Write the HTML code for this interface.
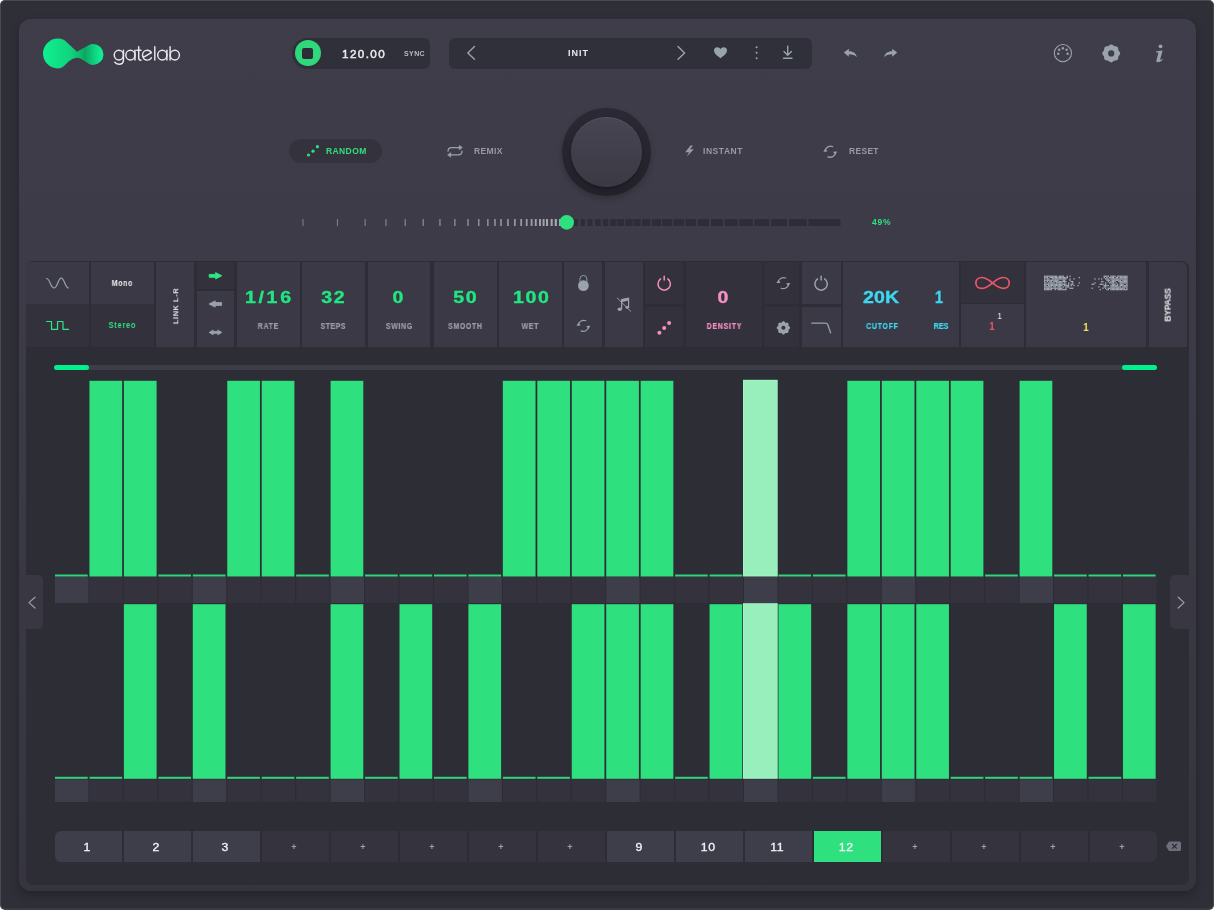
<!DOCTYPE html><html><head><meta charset="utf-8"><style>
*{margin:0;padding:0;box-sizing:border-box}
html,body{width:1214px;height:910px;overflow:hidden;background:#ffffff;font-family:"Liberation Sans",sans-serif}
.abs{position:absolute}
#frame{position:absolute;left:0;top:0;width:1214px;height:910px;border-radius:5px;background:#2f2f38;border-top:1px solid #4a4a55;border-left:1px solid #4a4a55;border-right:1px solid #45454f;border-bottom:2px solid #3a3a44}
#panel{position:absolute;left:19px;top:19px;width:1177px;height:872px;border-radius:12px;background:linear-gradient(180deg,#3e3d49 0%,#3b3a46 40%,#36353f 100%);box-shadow:0 4px 10px rgba(0,0,0,0.25)}
.t{position:absolute;white-space:nowrap;font-weight:bold;line-height:1;will-change:transform}
.box{position:absolute}
</style></head><body>
<div id="frame"></div>
<div id="panel"></div>
<svg class="abs" style="left:40px;top:35px" width="70" height="36" viewBox="40 35 70 36">
<defs><linearGradient id="lg" x1="43" y1="0" x2="103" y2="0" gradientUnits="userSpaceOnUse"><stop offset="0" stop-color="#0ff08f"/><stop offset="0.45" stop-color="#10d47f"/><stop offset="0.6" stop-color="#0fbd70"/><stop offset="0.7" stop-color="#0aa862"/><stop offset="0.85" stop-color="#10d07f"/><stop offset="1" stop-color="#0ff596"/></linearGradient></defs>
<path d="M58 38.5 C62 38.5 64.5 40 66.5 42 L77 51.8 L88.5 45.2 C90 44.4 91.5 44 93 44 A10.45 10.45 0 0 1 93 64.9 C91 64.9 89.5 64.3 88 63.3 L81 58.8 C79 57.8 77.5 57.6 75.5 57.9 C73 58.3 71 59.5 68 62 C65 65 62 68.5 58 68.5 A15 15 0 0 1 58 38.5 Z" fill="url(#lg)"/>
</svg>
<svg class="abs" style="left:108px;top:42px" width="78" height="26" viewBox="108 42 78 26" fill="none" stroke="#e8e8ec" stroke-width="1.45" stroke-linecap="round">
<ellipse cx="118.85" cy="55.1" rx="4.6" ry="4.9"/><path d="M123.45 50.2 V60 C123.45 63 121.5 64.3 119 64.3 C117 64.3 115.5 63.5 114.8 62.2"/>
<ellipse cx="130.4" cy="55.1" rx="4.6" ry="4.9"/><path d="M135 50.2 V60.1"/>
<path d="M138.7 46.8 V58 C138.7 59.5 139.6 60.2 141 60.2 M136.8 50.3 H141"/>
<path d="M143.2 57.3 L151.3 52.6 C150.5 51 149 50.2 147.2 50.2 C144.6 50.2 142.5 52.4 142.5 55.1 C142.5 57.9 144.6 60.1 147.2 60.1 C149 60.1 150.5 59.2 151.4 57.8"/>
<path d="M154.8 46.8 V60.1"/>
<ellipse cx="162.3" cy="55.1" rx="4.6" ry="4.9"/><path d="M166.9 50.2 V60.1"/>
<path d="M170.1 46.8 V60.1"/><ellipse cx="174.8" cy="55.1" rx="4.6" ry="4.9"/>
</svg>
<div class="box" style="left:292px;top:37.5px;width:137.5px;height:31.5px;background:#30303a;border-radius:16px 6px 6px 16px"></div>
<div class="box" style="left:294.5px;top:40.3px;width:26px;height:26px;border-radius:50%;background:#2fd97b"></div>
<div class="box" style="left:302px;top:48px;width:10.5px;height:10.5px;border-radius:2px;background:#2d2c37"></div>
<div class="t" style="left:342.3px;top:49.1px;font-size:10.8px;color:#ececf0;letter-spacing:1.3px;font-weight:normal;-webkit-text-stroke:0.45px currentColor;transform:scaleX(1.08);transform-origin:0 0">120.00</div>
<div class="t" style="left:403.5px;top:49.8px;font-size:7px;color:#b9b9c2;letter-spacing:0.4px">SYNC</div>
<div class="box" style="left:448.6px;top:37.7px;width:363.6px;height:31.3px;background:#30303a;border-radius:6px"></div>
<svg class="abs" style="left:0;top:0" width="1214" height="100" fill="none" stroke="#9aa2ac" stroke-width="1.4" stroke-linecap="round" stroke-linejoin="round">
<path d="M474.5 46.5 L467.8 53 L474.5 59.3"/>
<path d="M678 46.5 L684.6 53 L678 59.3"/>
<path d="M720.5 58.3 C717 55.5 714 53.5 714 50.5 C714 48.5 715.5 47.3 717.3 47.3 C718.8 47.3 719.8 48 720.5 49.2 C721.2 48 722.2 47.3 723.7 47.3 C725.5 47.3 727 48.5 727 50.5 C727 53.5 724 55.5 720.5 58.3 Z" fill="#9aa2ac" stroke="none"/>
<circle cx="756.6" cy="47.3" r="1" fill="#9aa2ac" stroke="none"/><circle cx="756.6" cy="52.8" r="1" fill="#9aa2ac" stroke="none"/><circle cx="756.6" cy="58.2" r="1" fill="#9aa2ac" stroke="none"/>
<path d="M787.7 46.2 V55 M784 51.5 L787.7 55.3 L791.4 51.5 M783.5 58.2 H792"/>
</svg>
<div class="t" style="left:567.5px;top:48.8px;font-size:9px;color:#e8e8ee;letter-spacing:1.0px">INIT</div>
<svg class="abs" style="left:0;top:0" width="1214" height="100">
<path d="M843.8 52.5 L848.8 48.8 L848.8 51.2 C853.5 51.2 856.3 53.5 856.8 57.2 C855 55.2 852.5 54.3 848.8 54.3 L848.8 56.7 Z" fill="#9aa2ac"/>
<path d="M897.2 52.5 L892.2 48.8 L892.2 51.2 C887.5 51.2 884.7 53.5 884.2 57.2 C886 55.2 888.5 54.3 892.2 54.3 L892.2 56.7 Z" fill="#9aa2ac"/>
</svg>
<svg class="abs" style="left:0;top:0" width="1214" height="100">
<circle cx="1062.9" cy="53.1" r="8.6" fill="none" stroke="#9aa2ac" stroke-width="1.1"/>
<circle cx="1058.2" cy="53.8" r="1.2" fill="#9aa2ac"/><circle cx="1059.2" cy="49.8" r="1.2" fill="#9aa2ac"/><circle cx="1062.9" cy="48.2" r="1.2" fill="#9aa2ac"/><circle cx="1066.6" cy="49.8" r="1.2" fill="#9aa2ac"/><circle cx="1067.6" cy="53.8" r="1.2" fill="#9aa2ac"/>
<path d="M1061.2 61.6 Q1062.9 60 1064.6 61.6 Z" fill="#9aa2ac"/>
<path d="M1120.20 53.40 L1120.11 53.98 L1119.85 54.54 L1119.49 55.05 L1119.10 55.52 L1118.75 55.96 L1118.50 56.42 L1118.35 56.93 L1118.28 57.49 L1118.23 58.09 L1118.12 58.71 L1117.91 59.29 L1117.56 59.76 L1117.09 60.11 L1116.51 60.32 L1115.89 60.43 L1115.29 60.48 L1114.73 60.55 L1114.22 60.70 L1113.76 60.95 L1113.32 61.30 L1112.85 61.69 L1112.34 62.05 L1111.78 62.31 L1111.20 62.40 L1110.62 62.31 L1110.06 62.05 L1109.55 61.69 L1109.08 61.30 L1108.64 60.95 L1108.18 60.70 L1107.67 60.55 L1107.11 60.48 L1106.51 60.43 L1105.89 60.32 L1105.31 60.11 L1104.84 59.76 L1104.49 59.29 L1104.28 58.71 L1104.17 58.09 L1104.12 57.49 L1104.05 56.93 L1103.90 56.42 L1103.65 55.96 L1103.30 55.52 L1102.91 55.05 L1102.55 54.54 L1102.29 53.98 L1102.20 53.40 L1102.29 52.82 L1102.55 52.26 L1102.91 51.75 L1103.30 51.28 L1103.65 50.84 L1103.90 50.38 L1104.05 49.87 L1104.12 49.31 L1104.17 48.71 L1104.28 48.09 L1104.49 47.51 L1104.84 47.04 L1105.31 46.69 L1105.89 46.48 L1106.51 46.37 L1107.11 46.32 L1107.67 46.25 L1108.18 46.10 L1108.64 45.85 L1109.08 45.50 L1109.55 45.11 L1110.06 44.75 L1110.62 44.49 L1111.20 44.40 L1111.78 44.49 L1112.34 44.75 L1112.85 45.11 L1113.32 45.50 L1113.76 45.85 L1114.22 46.10 L1114.73 46.25 L1115.29 46.32 L1115.89 46.37 L1116.51 46.48 L1117.09 46.69 L1117.56 47.04 L1117.91 47.51 L1118.12 48.09 L1118.23 48.71 L1118.28 49.31 L1118.35 49.87 L1118.50 50.38 L1118.75 50.84 L1119.10 51.28 L1119.49 51.75 L1119.85 52.26 L1120.11 52.82 Z M1114.3 53.4 A3.1 3.1 0 1 0 1108.1000000000001 53.4 A3.1 3.1 0 1 0 1114.3 53.4 Z" fill="#9aa2ac" fill-rule="evenodd"/>
<circle cx="1160.5" cy="46.3" r="1.9" fill="#9aa2ac"/>
<path d="M1156.3 51.2 L1162.6 50.4 L1160.2 59.3 C1160 60.2 1160.6 60.3 1161.3 59.6 L1162.6 58.7 L1162.3 60.3 C1160.9 61.6 1159.4 62.2 1157.8 62.2 C1156.6 62.2 1156.1 61.4 1156.5 60 L1158.5 52.6 L1156.1 52.5 Z" fill="#9aa2ac"/>
</svg>
<div class="box" style="left:289.2px;top:139.1px;width:92.8px;height:23.5px;border-radius:12px;background:#33323d"></div>
<svg class="abs" style="left:0;top:100px" width="1214" height="80" viewBox="0 100 1214 80">
<circle cx="308.5" cy="155" r="1.6" fill="#2fe07e"/><circle cx="313" cy="151.2" r="1.6" fill="#2fe07e"/><circle cx="317.4" cy="146.7" r="1.6" fill="#2fe07e"/>
<g fill="none" stroke="#9aa2ac" stroke-width="1.3" stroke-linecap="round" stroke-linejoin="round">
<path d="M448 151.2 Q448 147.6 451.6 147.6 H459.6"/>
<path d="M462 151.1 Q462 154.9 458.4 154.9 H450.6"/>
<path d="M825.1 150.5 A5.6 5.6 0 0 1 832.6 146.6"/><path d="M835.6 152.8 A5.6 5.6 0 0 1 828 156.8"/>
</g>
<path d="M459.2 145.3 L462.4 147.6 L459.2 149.9 Z M450.8 152.6 L447.6 154.9 L450.8 157.2 Z" fill="#9aa2ac" stroke="#9aa2ac" stroke-width="0.5" stroke-linejoin="round"/>
<path d="M823.3 151.7 L825.4 148.5 L827.4 151.5 Z M837.2 151.6 L835.1 154.8 L833.1 151.8 Z" fill="#9aa2ac"/>
<path d="M690.5 145.4 L685.2 152.3 L689 152.3 L686.7 156.8 L693.8 149.3 L690 149.3 L693 145.4 Z" fill="#9a9aa4"/>
</svg>
<div class="t" style="left:326.3px;top:147px;font-size:8.5px;color:#2fe07e;letter-spacing:0.4px">RANDOM</div>
<div class="t" style="left:473.5px;top:147px;font-size:8.5px;color:#9a9aa4;letter-spacing:0.4px">REMIX</div>
<div class="t" style="left:703px;top:147.4px;font-size:8.5px;color:#9a9aa4;letter-spacing:0.55px">INSTANT</div>
<div class="t" style="left:848.6px;top:147.4px;font-size:8.5px;color:#9a9aa4;letter-spacing:0.3px">RESET</div>
<div class="box" style="left:562.2px;top:107.8px;width:88.6px;height:88.6px;border-radius:50%;background:linear-gradient(180deg,#2b2a34,#22212a);box-shadow:0 3px 6px rgba(0,0,0,0.2)"></div>
<div class="box" style="left:571.2px;top:116.7px;width:70.8px;height:70.8px;border-radius:50%;background:linear-gradient(180deg,#464551,#3a3944);box-shadow:inset 0 1px 0 rgba(255,255,255,0.08),0 2px 3px rgba(0,0,0,0.25)"></div>
<svg class="abs" style="left:0;top:200px" width="1214" height="40" viewBox="0 200 1214 40"><rect x="302.5" y="219" width="1.00" height="7" fill="rgb(128,130,138)"/><rect x="336.9" y="219" width="1.05" height="7" fill="rgb(129,131,139)"/><rect x="364.6" y="219" width="1.10" height="7" fill="rgb(131,133,141)"/><rect x="385.4" y="219" width="1.15" height="7" fill="rgb(133,135,143)"/><rect x="404.6" y="219" width="1.20" height="7" fill="rgb(134,136,144)"/><rect x="422.6" y="219" width="1.25" height="7" fill="rgb(136,138,146)"/><rect x="439.3" y="219" width="1.30" height="7" fill="rgb(138,140,148)"/><rect x="454.2" y="219" width="1.35" height="7" fill="rgb(139,141,149)"/><rect x="467.3" y="219" width="1.40" height="7" fill="rgb(141,143,151)"/><rect x="478.0" y="219" width="1.45" height="7" fill="rgb(143,145,153)"/><rect x="487.1" y="219" width="1.50" height="7" fill="rgb(144,146,154)"/><rect x="494.2" y="219" width="1.55" height="7" fill="rgb(146,148,156)"/><rect x="500.2" y="219" width="1.60" height="7" fill="rgb(148,150,158)"/><rect x="507.1" y="219" width="1.65" height="7" fill="rgb(149,151,159)"/><rect x="514.0" y="219" width="1.70" height="7" fill="rgb(151,153,161)"/><rect x="520.3" y="219" width="1.75" height="7" fill="rgb(153,155,163)"/><rect x="525.8" y="219" width="1.80" height="7" fill="rgb(154,156,164)"/><rect x="530.7" y="219" width="1.85" height="7" fill="rgb(156,158,166)"/><rect x="534.8" y="219" width="1.90" height="7" fill="rgb(158,160,168)"/><rect x="539.0" y="219" width="1.95" height="7" fill="rgb(159,161,169)"/><rect x="542.6" y="219" width="2.00" height="7" fill="rgb(161,163,171)"/><rect x="546.0" y="219" width="2.05" height="7" fill="rgb(163,165,173)"/><rect x="550.6" y="219" width="2.10" height="7" fill="rgb(164,166,174)"/><rect x="554.7" y="219" width="2.15" height="7" fill="rgb(166,168,176)"/><rect x="559.0" y="219" width="2.20" height="7" fill="rgb(168,170,178)"/><rect x="573.8" y="219" width="4.1" height="7" fill="#2d2d37"/><rect x="580.8" y="219" width="4.0" height="7" fill="#2d2d37"/><rect x="587.7" y="219" width="4.6" height="7" fill="#2d2d37"/><rect x="595.2" y="219" width="5.4" height="7" fill="#2d2d37"/><rect x="602.9" y="219" width="5.5" height="7" fill="#2d2d37"/><rect x="610.0" y="219" width="6.5" height="7" fill="#2d2d37"/><rect x="617.3" y="219" width="6.7" height="7" fill="#2d2d37"/><rect x="625.2" y="219" width="7.5" height="7" fill="#2d2d37"/><rect x="633.6" y="219" width="7.1" height="7" fill="#2d2d37"/><rect x="642.0" y="219" width="8.5" height="7" fill="#2d2d37"/><rect x="652.0" y="219" width="9.0" height="7" fill="#2d2d37"/><rect x="662.0" y="219" width="9.9" height="7" fill="#2d2d37"/><rect x="673.4" y="219" width="10.6" height="7" fill="#2d2d37"/><rect x="685.4" y="219" width="10.6" height="7" fill="#2d2d37"/><rect x="697.8" y="219" width="11.2" height="7" fill="#2d2d37"/><rect x="711.1" y="219" width="11.8" height="7" fill="#2d2d37"/><rect x="724.6" y="219" width="13.0" height="7" fill="#2d2d37"/><rect x="739.3" y="219" width="13.5" height="7" fill="#2d2d37"/><rect x="754.4" y="219" width="14.8" height="7" fill="#2d2d37"/><rect x="771.3" y="219" width="15.6" height="7" fill="#2d2d37"/><rect x="789.0" y="219" width="17.8" height="7" fill="#2d2d37"/><rect x="808.5" y="219" width="32.0" height="7" fill="#2d2d37"/><circle cx="566.7" cy="222.4" r="7.3" fill="#2fe07e"/></svg>
<div class="t" style="left:872px;top:218px;font-size:8.5px;color:#2fe07e;letter-spacing:0.8px">49%</div>
<div class="box" style="left:25.5px;top:261px;width:1163px;height:623.7px;border-radius:7px;background:#2d2d36"></div>
<div class="box" style="left:26px;top:262px;width:63.0px;height:42.0px;background:#3a3945;border-top-left-radius:6px"></div>
<div class="box" style="left:26px;top:304px;width:63.0px;height:42.7px;background:#33323c;"></div>
<div class="box" style="left:91px;top:262px;width:62.7px;height:42.0px;background:#3a3945;"></div>
<div class="box" style="left:91px;top:304px;width:62.7px;height:42.7px;background:#33323c;"></div>
<div class="box" style="left:156px;top:262px;width:38.3px;height:84.7px;background:#3a3945;"></div>
<div class="box" style="left:196.7px;top:262px;width:37.1px;height:27.4px;background:#33323c;"></div>
<div class="box" style="left:196.7px;top:291px;width:37.1px;height:55.7px;background:#3a3945;"></div>
<div class="box" style="left:237.3px;top:262px;width:62.7px;height:84.7px;background:#3a3945;"></div>
<div class="box" style="left:302.3px;top:262px;width:63.0px;height:84.7px;background:#3a3945;"></div>
<div class="box" style="left:367.9px;top:262px;width:62.4px;height:84.7px;background:#3a3945;"></div>
<div class="box" style="left:433.7px;top:262px;width:63.3px;height:84.7px;background:#3a3945;"></div>
<div class="box" style="left:498.8px;top:262px;width:63.3px;height:84.7px;background:#3a3945;"></div>
<div class="box" style="left:564px;top:262px;width:38.3px;height:84.7px;background:#3a3945;"></div>
<div class="box" style="left:604.7px;top:262px;width:38.2px;height:84.7px;background:#3a3945;"></div>
<div class="box" style="left:644.8px;top:262px;width:38.5px;height:42.3px;background:#33323c;"></div>
<div class="box" style="left:644.8px;top:306.6px;width:38.5px;height:40.1px;background:#33323c;"></div>
<div class="box" style="left:685.8px;top:262px;width:76.7px;height:84.7px;background:#33323c;"></div>
<div class="box" style="left:764.2px;top:262px;width:35.0px;height:42.3px;background:#33323c;"></div>
<div class="box" style="left:764.2px;top:306.6px;width:35.0px;height:40.1px;background:#33323c;"></div>
<div class="box" style="left:801.8px;top:262px;width:38.9px;height:42.3px;background:#3a3945;"></div>
<div class="box" style="left:801.8px;top:306.6px;width:38.9px;height:40.1px;background:#3a3945;"></div>
<div class="box" style="left:842.8px;top:262px;width:115.9px;height:84.7px;background:#3a3945;"></div>
<div class="box" style="left:961px;top:262px;width:62.6px;height:41.4px;background:#33323c;"></div>
<div class="box" style="left:961px;top:304px;width:62.6px;height:42.7px;background:#3a3945;"></div>
<div class="box" style="left:1026.2px;top:262px;width:120.1px;height:84.7px;background:#3a3945;"></div>
<div class="box" style="left:1148.7px;top:262px;width:38.8px;height:84.7px;background:#3a3945;border-top-right-radius:6px"></div>
<div class="t" style="left:168.3px;width:200px;text-align:center;top:289.6px;font-size:16px;color:#22e581;letter-spacing:2.2px;text-indent:2.2px;transform:scaleX(1.22);-webkit-text-stroke:0.35px currentColor;">1/16</div>
<div class="t" style="left:232.8px;width:200px;text-align:center;top:289.6px;font-size:16px;color:#22e581;letter-spacing:1.4px;text-indent:1.4px;transform:scaleX(1.22);-webkit-text-stroke:0.35px currentColor;">32</div>
<div class="t" style="left:297.8px;width:200px;text-align:center;top:289.6px;font-size:16px;color:#22e581;letter-spacing:0px;text-indent:0px;transform:scaleX(1.22);-webkit-text-stroke:0.35px currentColor;">0</div>
<div class="t" style="left:364.6px;width:200px;text-align:center;top:289.6px;font-size:16px;color:#22e581;letter-spacing:1.4px;text-indent:1.4px;transform:scaleX(1.22);-webkit-text-stroke:0.35px currentColor;">50</div>
<div class="t" style="left:430.6px;width:200px;text-align:center;top:289.6px;font-size:16px;color:#22e581;letter-spacing:1.4px;text-indent:1.4px;transform:scaleX(1.22);-webkit-text-stroke:0.35px currentColor;">100</div>
<div class="t" style="left:168.2px;width:200px;text-align:center;top:323.4px;font-size:8.2px;color:#9d9da8;letter-spacing:0.75px;text-indent:0.75px;transform:scaleX(0.86);-webkit-text-stroke:0.2px currentColor">RATE</div>
<div class="t" style="left:233.3px;width:200px;text-align:center;top:323.4px;font-size:8.2px;color:#9d9da8;letter-spacing:0.5px;text-indent:0.5px;transform:scaleX(0.86);-webkit-text-stroke:0.2px currentColor">STEPS</div>
<div class="t" style="left:298.6px;width:200px;text-align:center;top:323.4px;font-size:8.2px;color:#9d9da8;letter-spacing:0.7px;text-indent:0.7px;transform:scaleX(0.86);-webkit-text-stroke:0.2px currentColor">SWING</div>
<div class="t" style="left:364.8px;width:200px;text-align:center;top:323.4px;font-size:8.2px;color:#9d9da8;letter-spacing:0.7px;text-indent:0.7px;transform:scaleX(0.86);-webkit-text-stroke:0.2px currentColor">SMOOTH</div>
<div class="t" style="left:430.4px;width:200px;text-align:center;top:323.4px;font-size:8.2px;color:#9d9da8;letter-spacing:0.7px;text-indent:0.7px;transform:scaleX(0.86);-webkit-text-stroke:0.2px currentColor">WET</div>
<div class="t" style="left:622.7px;width:200px;text-align:center;top:289.6px;font-size:16px;color:#f590c3;letter-spacing:0px;text-indent:0px;transform:scaleX(1.22);-webkit-text-stroke:0.35px currentColor;">0</div>
<div class="t" style="left:623.5px;width:200px;text-align:center;top:323.4px;font-size:8.2px;color:#f590c3;letter-spacing:0.85px;text-indent:0.85px;transform:scaleX(0.86);-webkit-text-stroke:0.2px currentColor">DENSITY</div>
<div class="t" style="left:781.2px;width:200px;text-align:center;top:289.6px;font-size:16px;color:#3fd6ef;letter-spacing:0.1px;text-indent:0.1px;transform:scaleX(1.22);-webkit-text-stroke:0.35px currentColor;">20K</div>
<div class="t" style="left:839.4px;width:200px;text-align:center;top:289.6px;font-size:16px;color:#3fd6ef;letter-spacing:0px;text-indent:0px;-webkit-text-stroke:0.35px currentColor;transform:scaleX(0.9)">1</div>
<div class="t" style="left:782px;width:200px;text-align:center;top:323.4px;font-size:8.2px;color:#3fd6ef;letter-spacing:0.8px;text-indent:0.8px;transform:scaleX(0.86);-webkit-text-stroke:0.2px currentColor">CUTOFF</div>
<div class="t" style="left:841.2px;width:200px;text-align:center;top:323.4px;font-size:8.2px;color:#3fd6ef;letter-spacing:0.0px;text-indent:0.0px;transform:scaleX(0.86);-webkit-text-stroke:0.2px currentColor">RES</div>
<div class="t" style="left:22.099999999999994px;width:200px;text-align:center;top:278.6px;font-size:8.5px;color:#ececf0;letter-spacing:0.6px;text-indent:0.6px;transform:scaleX(0.85)">Mono</div>
<div class="t" style="left:22px;width:200px;text-align:center;top:321.2px;font-size:8.5px;color:#2fe585;letter-spacing:1.0px;text-indent:1.0px;transform:scaleX(0.85)">Stereo</div>
<div class="t" style="left:891.6px;width:200px;text-align:center;top:321.3px;font-size:10.5px;color:#ec5464;letter-spacing:0px;text-indent:0px;transform:scaleX(0.9)">1</div>
<div class="t" style="left:997px;top:310.8px;font-size:9.5px;color:#e6e6ea;font-weight:normal;transform:scaleX(0.85)">1</div>
<div class="t" style="left:985.5999999999999px;width:200px;text-align:center;top:321.5px;font-size:10.5px;color:#f2e15c;letter-spacing:0px;text-indent:0px;transform:scaleX(0.9)">1</div>
<div class="t" style="left:175.8px;top:305.5px;width:0;height:0"><div style="position:absolute;left:0;top:0;transform:translate(-50%,-50%) rotate(-90deg);font-size:7.5px;color:#e0e0e6;letter-spacing:0.5px;white-space:nowrap;font-weight:bold">LINK L-R</div></div>
<div class="t" style="left:1168.3px;top:305px;width:0;height:0"><div style="position:absolute;left:0;top:0;transform:translate(-50%,-50%) rotate(-90deg);font-size:8.7px;color:#ececf0;letter-spacing:-0.3px;white-space:nowrap;font-weight:bold">BYPASS</div></div>
<svg class="abs" style="left:0;top:250px" width="1214" height="100" viewBox="0 250 1214 100">
<g fill="none" stroke-linecap="round" stroke-linejoin="round">
<path d="M46.5 278.5 C50 278.5 50.5 288 54 288 C57.5 288 58 278.2 61.2 278.2 C64.5 278.2 65 288 68.5 288" stroke="#9aa2ac" stroke-width="1.2"/>
<path d="M46.5 321.5 H51.5 V329.4 H57.5 V321.5 H63 V329.4 H68.5" stroke="#2fe585" stroke-width="1.2"/>
<path d="M579.9 281.5 V279 A3.5 3.6 0 0 1 586.9 279 V281.5" stroke="#9aa2ac" stroke-width="0.9"/>
<path d="M660.6 278.9 A6.2 6.2 0 1 0 667.8 278.9 M664.2 276.3 V280" stroke="#f48fc0" stroke-width="1.5"/>
<path d="M817.5 278.9 A6.2 6.2 0 1 0 824.7 278.9 M821.1 276.3 V280" stroke="#9aa2ac" stroke-width="1.5"/>
<path d="M811.8 323.2 H825.5 Q827.3 323.2 827.9 325 L830.6 332.8" stroke="#9aa2ac" stroke-width="1.3"/>
<path d="M992.6 283 C989 280.5 986.5 277.5 981.8 277.5 C978 277.5 975.9 280 975.9 283 C975.9 286 978 288.4 981.8 288.4 C986.5 288.4 989 285.5 992.6 283 C996 280.5 998.5 277.5 1003.3 277.5 C1007 277.5 1009.2 280 1009.2 283 C1009.2 286 1007 288.4 1003.3 288.4 C998.5 288.4 996 285.5 992.6 283 Z" stroke="#ec5468" stroke-width="1.7"/>
<g stroke="#9aa2ac" stroke-width="1.2">
<path d="M578.3 324.6 A5.6 5.6 0 0 1 585.8 320.7"/><path d="M588.8 326.9 A5.6 5.6 0 0 1 581.2 330.9"/>
<path d="M778.2 281.9 A5.6 5.6 0 0 1 785.7 278"/><path d="M788.7 284.2 A5.6 5.6 0 0 1 781.1 288.2"/>
<path d="M621.6 309 V299.6 L628.6 298 V307.5"/>
<path d="M617.3 298 L630.6 311.2" stroke-width="1"/>
</g>
</g>
<g fill="#9aa2ac">
<path d="M576.5 325.8 L578.6 322.6 L580.6 325.6 Z"/><path d="M590.4 325.7 L588.3 328.9 L586.3 325.9 Z"/>
<path d="M776.4 283.1 L778.5 279.9 L780.5 282.9 Z"/><path d="M790.3 283 L788.2 286.2 L786.2 283.2 Z"/>
<path d="M621.6 299.6 L628.6 298 V300.6 L621.6 302.2 Z"/>
<ellipse cx="619.7" cy="309.2" rx="2.1" ry="1.8"/><ellipse cx="627" cy="307.4" rx="1.5" ry="1.3"/>
</g>
<circle cx="583.4" cy="285.6" r="5.4" fill="#9aa2ac"/>
<path d="M790.10 327.80 L790.01 328.23 L789.77 328.64 L789.43 329.00 L789.07 329.32 L788.77 329.62 L788.57 329.94 L788.49 330.31 L788.49 330.74 L788.51 331.22 L788.50 331.71 L788.38 332.17 L788.14 332.54 L787.77 332.78 L787.31 332.90 L786.82 332.91 L786.34 332.89 L785.91 332.89 L785.54 332.97 L785.22 333.17 L784.92 333.47 L784.60 333.83 L784.24 334.17 L783.83 334.41 L783.40 334.50 L782.97 334.41 L782.56 334.17 L782.20 333.83 L781.88 333.47 L781.58 333.17 L781.26 332.97 L780.89 332.89 L780.46 332.89 L779.98 332.91 L779.49 332.90 L779.03 332.78 L778.66 332.54 L778.42 332.17 L778.30 331.71 L778.29 331.22 L778.31 330.74 L778.31 330.31 L778.23 329.94 L778.03 329.62 L777.73 329.32 L777.37 329.00 L777.03 328.64 L776.79 328.23 L776.70 327.80 L776.79 327.37 L777.03 326.96 L777.37 326.60 L777.73 326.28 L778.03 325.98 L778.23 325.66 L778.31 325.29 L778.31 324.86 L778.29 324.38 L778.30 323.89 L778.42 323.43 L778.66 323.06 L779.03 322.82 L779.49 322.70 L779.98 322.69 L780.46 322.71 L780.89 322.71 L781.26 322.63 L781.58 322.43 L781.88 322.13 L782.20 321.77 L782.56 321.43 L782.97 321.19 L783.40 321.10 L783.83 321.19 L784.24 321.43 L784.60 321.77 L784.92 322.13 L785.22 322.43 L785.54 322.63 L785.91 322.71 L786.34 322.71 L786.82 322.69 L787.31 322.70 L787.77 322.82 L788.14 323.06 L788.38 323.43 L788.50 323.89 L788.51 324.38 L788.49 324.86 L788.49 325.29 L788.57 325.66 L788.77 325.98 L789.07 326.28 L789.43 326.60 L789.77 326.96 L790.01 327.37 Z M785.4 327.8 A2.0 2.0 0 1 0 781.4 327.8 A2.0 2.0 0 1 0 785.4 327.8 Z" fill="#9aa2ac" fill-rule="evenodd"/>
<circle cx="659.4" cy="332.7" r="2" fill="#f48fc0"/><circle cx="664.2" cy="328" r="2" fill="#f48fc0"/><circle cx="669.1" cy="323.1" r="2" fill="#f48fc0"/>
<path d="M209.2 274.4 H215.6 V272.6 L221.8 275.8 L215.6 279 V277.3 H209.2 Z" fill="#2fe585" stroke="#2fe585" stroke-width="0.9" stroke-linejoin="round"/>
<path d="M221.6 302.6 H215.2 V300.9 L209 304 L215.2 307.1 V305.4 H221.6 Z" fill="#9aa2ac" stroke="#9aa2ac" stroke-width="0.9" stroke-linejoin="round"/>
<path d="M209 332.4 L213.2 329.9 V331.3 H217.8 V329.9 L222 332.4 L217.8 334.9 V333.5 H213.2 V334.9 Z" fill="#9aa2ac" stroke="#9aa2ac" stroke-width="0.6" stroke-linejoin="round"/>
<g fill="#a3abb4"><rect x="1044.00" y="275.60" width="1.33" height="1.33"/><rect x="1126.27" y="275.60" width="1.33" height="1.33"/><rect x="1045.33" y="275.60" width="1.33" height="1.33"/><rect x="1124.93" y="275.60" width="1.33" height="1.33"/><rect x="1046.67" y="275.60" width="1.33" height="1.33"/><rect x="1123.60" y="275.60" width="1.33" height="1.33"/><rect x="1048.00" y="275.60" width="1.33" height="1.33"/><rect x="1122.27" y="275.60" width="1.33" height="1.33"/><rect x="1049.33" y="275.60" width="1.33" height="1.33"/><rect x="1120.93" y="275.60" width="1.33" height="1.33"/><rect x="1050.66" y="275.60" width="1.33" height="1.33"/><rect x="1119.60" y="275.60" width="1.33" height="1.33"/><rect x="1052.00" y="275.60" width="1.33" height="1.33"/><rect x="1118.27" y="275.60" width="1.33" height="1.33"/><rect x="1053.33" y="275.60" width="1.33" height="1.33"/><rect x="1116.94" y="275.60" width="1.33" height="1.33"/><rect x="1054.66" y="275.60" width="1.33" height="1.33"/><rect x="1056.00" y="275.60" width="1.33" height="1.33"/><rect x="1114.27" y="275.60" width="1.33" height="1.33"/><rect x="1112.94" y="275.60" width="1.33" height="1.33"/><rect x="1058.66" y="275.60" width="1.33" height="1.33"/><rect x="1111.60" y="275.60" width="1.33" height="1.33"/><rect x="1060.00" y="275.60" width="1.33" height="1.33"/><rect x="1110.27" y="275.60" width="1.33" height="1.33"/><rect x="1061.33" y="275.60" width="1.33" height="1.33"/><rect x="1062.66" y="275.60" width="1.33" height="1.33"/><rect x="1107.61" y="275.60" width="1.33" height="1.33"/><rect x="1106.27" y="275.60" width="1.33" height="1.33"/><rect x="1104.94" y="275.60" width="1.33" height="1.33"/><rect x="1066.66" y="275.60" width="1.33" height="1.33"/><rect x="1103.61" y="275.60" width="1.33" height="1.33"/><rect x="1069.33" y="275.60" width="1.33" height="1.33"/><rect x="1044.00" y="276.93" width="1.33" height="1.33"/><rect x="1126.27" y="276.93" width="1.33" height="1.33"/><rect x="1045.33" y="276.93" width="1.33" height="1.33"/><rect x="1124.93" y="276.93" width="1.33" height="1.33"/><rect x="1046.67" y="276.93" width="1.33" height="1.33"/><rect x="1123.60" y="276.93" width="1.33" height="1.33"/><rect x="1122.27" y="276.93" width="1.33" height="1.33"/><rect x="1049.33" y="276.93" width="1.33" height="1.33"/><rect x="1120.93" y="276.93" width="1.33" height="1.33"/><rect x="1050.66" y="276.93" width="1.33" height="1.33"/><rect x="1119.60" y="276.93" width="1.33" height="1.33"/><rect x="1052.00" y="276.93" width="1.33" height="1.33"/><rect x="1053.33" y="276.93" width="1.33" height="1.33"/><rect x="1116.94" y="276.93" width="1.33" height="1.33"/><rect x="1054.66" y="276.93" width="1.33" height="1.33"/><rect x="1115.60" y="276.93" width="1.33" height="1.33"/><rect x="1056.00" y="276.93" width="1.33" height="1.33"/><rect x="1057.33" y="276.93" width="1.33" height="1.33"/><rect x="1112.94" y="276.93" width="1.33" height="1.33"/><rect x="1058.66" y="276.93" width="1.33" height="1.33"/><rect x="1111.60" y="276.93" width="1.33" height="1.33"/><rect x="1060.00" y="276.93" width="1.33" height="1.33"/><rect x="1110.27" y="276.93" width="1.33" height="1.33"/><rect x="1061.33" y="276.93" width="1.33" height="1.33"/><rect x="1108.94" y="276.93" width="1.33" height="1.33"/><rect x="1062.66" y="276.93" width="1.33" height="1.33"/><rect x="1063.99" y="276.93" width="1.33" height="1.33"/><rect x="1106.27" y="276.93" width="1.33" height="1.33"/><rect x="1065.33" y="276.93" width="1.33" height="1.33"/><rect x="1066.66" y="276.93" width="1.33" height="1.33"/><rect x="1103.61" y="276.93" width="1.33" height="1.33"/><rect x="1078.66" y="276.93" width="1.33" height="1.33"/><rect x="1044.00" y="278.27" width="1.33" height="1.33"/><rect x="1126.27" y="278.27" width="1.33" height="1.33"/><rect x="1124.93" y="278.27" width="1.33" height="1.33"/><rect x="1046.67" y="278.27" width="1.33" height="1.33"/><rect x="1123.60" y="278.27" width="1.33" height="1.33"/><rect x="1048.00" y="278.27" width="1.33" height="1.33"/><rect x="1122.27" y="278.27" width="1.33" height="1.33"/><rect x="1120.93" y="278.27" width="1.33" height="1.33"/><rect x="1119.60" y="278.27" width="1.33" height="1.33"/><rect x="1052.00" y="278.27" width="1.33" height="1.33"/><rect x="1118.27" y="278.27" width="1.33" height="1.33"/><rect x="1053.33" y="278.27" width="1.33" height="1.33"/><rect x="1116.94" y="278.27" width="1.33" height="1.33"/><rect x="1054.66" y="278.27" width="1.33" height="1.33"/><rect x="1115.60" y="278.27" width="1.33" height="1.33"/><rect x="1056.00" y="278.27" width="1.33" height="1.33"/><rect x="1114.27" y="278.27" width="1.33" height="1.33"/><rect x="1057.33" y="278.27" width="1.33" height="1.33"/><rect x="1112.94" y="278.27" width="1.33" height="1.33"/><rect x="1058.66" y="278.27" width="1.33" height="1.33"/><rect x="1111.60" y="278.27" width="1.33" height="1.33"/><rect x="1060.00" y="278.27" width="1.33" height="1.33"/><rect x="1110.27" y="278.27" width="1.33" height="1.33"/><rect x="1061.33" y="278.27" width="1.33" height="1.33"/><rect x="1062.66" y="278.27" width="1.33" height="1.33"/><rect x="1107.61" y="278.27" width="1.33" height="1.33"/><rect x="1063.99" y="278.27" width="1.33" height="1.33"/><rect x="1106.27" y="278.27" width="1.33" height="1.33"/><rect x="1065.33" y="278.27" width="1.33" height="1.33"/><rect x="1104.94" y="278.27" width="1.33" height="1.33"/><rect x="1069.33" y="278.27" width="1.33" height="1.33"/><rect x="1100.94" y="278.27" width="1.33" height="1.33"/><rect x="1098.27" y="278.27" width="1.33" height="1.33"/><rect x="1073.33" y="278.27" width="1.33" height="1.33"/><rect x="1094.27" y="278.27" width="1.33" height="1.33"/><rect x="1044.00" y="279.60" width="1.33" height="1.33"/><rect x="1126.27" y="279.60" width="1.33" height="1.33"/><rect x="1045.33" y="279.60" width="1.33" height="1.33"/><rect x="1124.93" y="279.60" width="1.33" height="1.33"/><rect x="1046.67" y="279.60" width="1.33" height="1.33"/><rect x="1123.60" y="279.60" width="1.33" height="1.33"/><rect x="1048.00" y="279.60" width="1.33" height="1.33"/><rect x="1122.27" y="279.60" width="1.33" height="1.33"/><rect x="1049.33" y="279.60" width="1.33" height="1.33"/><rect x="1050.66" y="279.60" width="1.33" height="1.33"/><rect x="1119.60" y="279.60" width="1.33" height="1.33"/><rect x="1052.00" y="279.60" width="1.33" height="1.33"/><rect x="1118.27" y="279.60" width="1.33" height="1.33"/><rect x="1053.33" y="279.60" width="1.33" height="1.33"/><rect x="1116.94" y="279.60" width="1.33" height="1.33"/><rect x="1054.66" y="279.60" width="1.33" height="1.33"/><rect x="1115.60" y="279.60" width="1.33" height="1.33"/><rect x="1056.00" y="279.60" width="1.33" height="1.33"/><rect x="1114.27" y="279.60" width="1.33" height="1.33"/><rect x="1057.33" y="279.60" width="1.33" height="1.33"/><rect x="1112.94" y="279.60" width="1.33" height="1.33"/><rect x="1111.60" y="279.60" width="1.33" height="1.33"/><rect x="1108.94" y="279.60" width="1.33" height="1.33"/><rect x="1062.66" y="279.60" width="1.33" height="1.33"/><rect x="1107.61" y="279.60" width="1.33" height="1.33"/><rect x="1063.99" y="279.60" width="1.33" height="1.33"/><rect x="1106.27" y="279.60" width="1.33" height="1.33"/><rect x="1069.33" y="279.60" width="1.33" height="1.33"/><rect x="1044.00" y="280.93" width="1.33" height="1.33"/><rect x="1126.27" y="280.93" width="1.33" height="1.33"/><rect x="1124.93" y="280.93" width="1.33" height="1.33"/><rect x="1046.67" y="280.93" width="1.33" height="1.33"/><rect x="1123.60" y="280.93" width="1.33" height="1.33"/><rect x="1122.27" y="280.93" width="1.33" height="1.33"/><rect x="1049.33" y="280.93" width="1.33" height="1.33"/><rect x="1120.93" y="280.93" width="1.33" height="1.33"/><rect x="1050.66" y="280.93" width="1.33" height="1.33"/><rect x="1119.60" y="280.93" width="1.33" height="1.33"/><rect x="1118.27" y="280.93" width="1.33" height="1.33"/><rect x="1053.33" y="280.93" width="1.33" height="1.33"/><rect x="1054.66" y="280.93" width="1.33" height="1.33"/><rect x="1056.00" y="280.93" width="1.33" height="1.33"/><rect x="1114.27" y="280.93" width="1.33" height="1.33"/><rect x="1057.33" y="280.93" width="1.33" height="1.33"/><rect x="1112.94" y="280.93" width="1.33" height="1.33"/><rect x="1058.66" y="280.93" width="1.33" height="1.33"/><rect x="1111.60" y="280.93" width="1.33" height="1.33"/><rect x="1060.00" y="280.93" width="1.33" height="1.33"/><rect x="1110.27" y="280.93" width="1.33" height="1.33"/><rect x="1061.33" y="280.93" width="1.33" height="1.33"/><rect x="1062.66" y="280.93" width="1.33" height="1.33"/><rect x="1107.61" y="280.93" width="1.33" height="1.33"/><rect x="1063.99" y="280.93" width="1.33" height="1.33"/><rect x="1065.33" y="280.93" width="1.33" height="1.33"/><rect x="1102.27" y="280.93" width="1.33" height="1.33"/><rect x="1100.94" y="280.93" width="1.33" height="1.33"/><rect x="1070.66" y="280.93" width="1.33" height="1.33"/><rect x="1071.99" y="280.93" width="1.33" height="1.33"/><rect x="1044.00" y="282.27" width="1.33" height="1.33"/><rect x="1126.27" y="282.27" width="1.33" height="1.33"/><rect x="1045.33" y="282.27" width="1.33" height="1.33"/><rect x="1124.93" y="282.27" width="1.33" height="1.33"/><rect x="1123.60" y="282.27" width="1.33" height="1.33"/><rect x="1048.00" y="282.27" width="1.33" height="1.33"/><rect x="1122.27" y="282.27" width="1.33" height="1.33"/><rect x="1049.33" y="282.27" width="1.33" height="1.33"/><rect x="1120.93" y="282.27" width="1.33" height="1.33"/><rect x="1050.66" y="282.27" width="1.33" height="1.33"/><rect x="1119.60" y="282.27" width="1.33" height="1.33"/><rect x="1052.00" y="282.27" width="1.33" height="1.33"/><rect x="1053.33" y="282.27" width="1.33" height="1.33"/><rect x="1115.60" y="282.27" width="1.33" height="1.33"/><rect x="1056.00" y="282.27" width="1.33" height="1.33"/><rect x="1057.33" y="282.27" width="1.33" height="1.33"/><rect x="1112.94" y="282.27" width="1.33" height="1.33"/><rect x="1058.66" y="282.27" width="1.33" height="1.33"/><rect x="1111.60" y="282.27" width="1.33" height="1.33"/><rect x="1060.00" y="282.27" width="1.33" height="1.33"/><rect x="1110.27" y="282.27" width="1.33" height="1.33"/><rect x="1061.33" y="282.27" width="1.33" height="1.33"/><rect x="1108.94" y="282.27" width="1.33" height="1.33"/><rect x="1063.99" y="282.27" width="1.33" height="1.33"/><rect x="1104.94" y="282.27" width="1.33" height="1.33"/><rect x="1067.99" y="282.27" width="1.33" height="1.33"/><rect x="1071.99" y="282.27" width="1.33" height="1.33"/><rect x="1094.27" y="282.27" width="1.33" height="1.33"/><rect x="1078.66" y="282.27" width="1.33" height="1.33"/><rect x="1044.00" y="283.60" width="1.33" height="1.33"/><rect x="1126.27" y="283.60" width="1.33" height="1.33"/><rect x="1045.33" y="283.60" width="1.33" height="1.33"/><rect x="1046.67" y="283.60" width="1.33" height="1.33"/><rect x="1048.00" y="283.60" width="1.33" height="1.33"/><rect x="1122.27" y="283.60" width="1.33" height="1.33"/><rect x="1049.33" y="283.60" width="1.33" height="1.33"/><rect x="1120.93" y="283.60" width="1.33" height="1.33"/><rect x="1050.66" y="283.60" width="1.33" height="1.33"/><rect x="1119.60" y="283.60" width="1.33" height="1.33"/><rect x="1052.00" y="283.60" width="1.33" height="1.33"/><rect x="1053.33" y="283.60" width="1.33" height="1.33"/><rect x="1116.94" y="283.60" width="1.33" height="1.33"/><rect x="1054.66" y="283.60" width="1.33" height="1.33"/><rect x="1056.00" y="283.60" width="1.33" height="1.33"/><rect x="1114.27" y="283.60" width="1.33" height="1.33"/><rect x="1057.33" y="283.60" width="1.33" height="1.33"/><rect x="1112.94" y="283.60" width="1.33" height="1.33"/><rect x="1058.66" y="283.60" width="1.33" height="1.33"/><rect x="1111.60" y="283.60" width="1.33" height="1.33"/><rect x="1060.00" y="283.60" width="1.33" height="1.33"/><rect x="1061.33" y="283.60" width="1.33" height="1.33"/><rect x="1062.66" y="283.60" width="1.33" height="1.33"/><rect x="1063.99" y="283.60" width="1.33" height="1.33"/><rect x="1065.33" y="283.60" width="1.33" height="1.33"/><rect x="1104.94" y="283.60" width="1.33" height="1.33"/><rect x="1067.99" y="283.60" width="1.33" height="1.33"/><rect x="1102.27" y="283.60" width="1.33" height="1.33"/><rect x="1100.94" y="283.60" width="1.33" height="1.33"/><rect x="1070.66" y="283.60" width="1.33" height="1.33"/><rect x="1099.61" y="283.60" width="1.33" height="1.33"/><rect x="1071.99" y="283.60" width="1.33" height="1.33"/><rect x="1092.94" y="283.60" width="1.33" height="1.33"/><rect x="1091.61" y="283.60" width="1.33" height="1.33"/><rect x="1044.00" y="284.93" width="1.33" height="1.33"/><rect x="1126.27" y="284.93" width="1.33" height="1.33"/><rect x="1045.33" y="284.93" width="1.33" height="1.33"/><rect x="1124.93" y="284.93" width="1.33" height="1.33"/><rect x="1123.60" y="284.93" width="1.33" height="1.33"/><rect x="1048.00" y="284.93" width="1.33" height="1.33"/><rect x="1122.27" y="284.93" width="1.33" height="1.33"/><rect x="1049.33" y="284.93" width="1.33" height="1.33"/><rect x="1120.93" y="284.93" width="1.33" height="1.33"/><rect x="1050.66" y="284.93" width="1.33" height="1.33"/><rect x="1119.60" y="284.93" width="1.33" height="1.33"/><rect x="1052.00" y="284.93" width="1.33" height="1.33"/><rect x="1053.33" y="284.93" width="1.33" height="1.33"/><rect x="1116.94" y="284.93" width="1.33" height="1.33"/><rect x="1054.66" y="284.93" width="1.33" height="1.33"/><rect x="1115.60" y="284.93" width="1.33" height="1.33"/><rect x="1056.00" y="284.93" width="1.33" height="1.33"/><rect x="1114.27" y="284.93" width="1.33" height="1.33"/><rect x="1057.33" y="284.93" width="1.33" height="1.33"/><rect x="1112.94" y="284.93" width="1.33" height="1.33"/><rect x="1058.66" y="284.93" width="1.33" height="1.33"/><rect x="1111.60" y="284.93" width="1.33" height="1.33"/><rect x="1060.00" y="284.93" width="1.33" height="1.33"/><rect x="1110.27" y="284.93" width="1.33" height="1.33"/><rect x="1061.33" y="284.93" width="1.33" height="1.33"/><rect x="1107.61" y="284.93" width="1.33" height="1.33"/><rect x="1063.99" y="284.93" width="1.33" height="1.33"/><rect x="1106.27" y="284.93" width="1.33" height="1.33"/><rect x="1065.33" y="284.93" width="1.33" height="1.33"/><rect x="1104.94" y="284.93" width="1.33" height="1.33"/><rect x="1066.66" y="284.93" width="1.33" height="1.33"/><rect x="1103.61" y="284.93" width="1.33" height="1.33"/><rect x="1067.99" y="284.93" width="1.33" height="1.33"/><rect x="1070.66" y="284.93" width="1.33" height="1.33"/><rect x="1073.33" y="284.93" width="1.33" height="1.33"/><rect x="1077.33" y="284.93" width="1.33" height="1.33"/><rect x="1044.00" y="286.26" width="1.33" height="1.33"/><rect x="1126.27" y="286.26" width="1.33" height="1.33"/><rect x="1045.33" y="286.26" width="1.33" height="1.33"/><rect x="1124.93" y="286.26" width="1.33" height="1.33"/><rect x="1046.67" y="286.26" width="1.33" height="1.33"/><rect x="1123.60" y="286.26" width="1.33" height="1.33"/><rect x="1048.00" y="286.26" width="1.33" height="1.33"/><rect x="1122.27" y="286.26" width="1.33" height="1.33"/><rect x="1049.33" y="286.26" width="1.33" height="1.33"/><rect x="1050.66" y="286.26" width="1.33" height="1.33"/><rect x="1119.60" y="286.26" width="1.33" height="1.33"/><rect x="1118.27" y="286.26" width="1.33" height="1.33"/><rect x="1053.33" y="286.26" width="1.33" height="1.33"/><rect x="1116.94" y="286.26" width="1.33" height="1.33"/><rect x="1054.66" y="286.26" width="1.33" height="1.33"/><rect x="1115.60" y="286.26" width="1.33" height="1.33"/><rect x="1114.27" y="286.26" width="1.33" height="1.33"/><rect x="1057.33" y="286.26" width="1.33" height="1.33"/><rect x="1112.94" y="286.26" width="1.33" height="1.33"/><rect x="1058.66" y="286.26" width="1.33" height="1.33"/><rect x="1111.60" y="286.26" width="1.33" height="1.33"/><rect x="1060.00" y="286.26" width="1.33" height="1.33"/><rect x="1110.27" y="286.26" width="1.33" height="1.33"/><rect x="1062.66" y="286.26" width="1.33" height="1.33"/><rect x="1065.33" y="286.26" width="1.33" height="1.33"/><rect x="1104.94" y="286.26" width="1.33" height="1.33"/><rect x="1066.66" y="286.26" width="1.33" height="1.33"/><rect x="1103.61" y="286.26" width="1.33" height="1.33"/><rect x="1067.99" y="286.26" width="1.33" height="1.33"/><rect x="1098.27" y="286.26" width="1.33" height="1.33"/><rect x="1044.00" y="287.60" width="1.33" height="1.33"/><rect x="1126.27" y="287.60" width="1.33" height="1.33"/><rect x="1045.33" y="287.60" width="1.33" height="1.33"/><rect x="1046.67" y="287.60" width="1.33" height="1.33"/><rect x="1123.60" y="287.60" width="1.33" height="1.33"/><rect x="1048.00" y="287.60" width="1.33" height="1.33"/><rect x="1122.27" y="287.60" width="1.33" height="1.33"/><rect x="1049.33" y="287.60" width="1.33" height="1.33"/><rect x="1120.93" y="287.60" width="1.33" height="1.33"/><rect x="1050.66" y="287.60" width="1.33" height="1.33"/><rect x="1119.60" y="287.60" width="1.33" height="1.33"/><rect x="1052.00" y="287.60" width="1.33" height="1.33"/><rect x="1118.27" y="287.60" width="1.33" height="1.33"/><rect x="1053.33" y="287.60" width="1.33" height="1.33"/><rect x="1116.94" y="287.60" width="1.33" height="1.33"/><rect x="1054.66" y="287.60" width="1.33" height="1.33"/><rect x="1115.60" y="287.60" width="1.33" height="1.33"/><rect x="1056.00" y="287.60" width="1.33" height="1.33"/><rect x="1114.27" y="287.60" width="1.33" height="1.33"/><rect x="1057.33" y="287.60" width="1.33" height="1.33"/><rect x="1112.94" y="287.60" width="1.33" height="1.33"/><rect x="1058.66" y="287.60" width="1.33" height="1.33"/><rect x="1111.60" y="287.60" width="1.33" height="1.33"/><rect x="1060.00" y="287.60" width="1.33" height="1.33"/><rect x="1110.27" y="287.60" width="1.33" height="1.33"/><rect x="1061.33" y="287.60" width="1.33" height="1.33"/><rect x="1108.94" y="287.60" width="1.33" height="1.33"/><rect x="1107.61" y="287.60" width="1.33" height="1.33"/><rect x="1065.33" y="287.60" width="1.33" height="1.33"/><rect x="1104.94" y="287.60" width="1.33" height="1.33"/><rect x="1102.27" y="287.60" width="1.33" height="1.33"/><rect x="1069.33" y="287.60" width="1.33" height="1.33"/><rect x="1070.66" y="287.60" width="1.33" height="1.33"/><rect x="1071.99" y="287.60" width="1.33" height="1.33"/><rect x="1091.61" y="287.60" width="1.33" height="1.33"/><rect x="1044.00" y="288.93" width="1.33" height="1.33"/><rect x="1126.27" y="288.93" width="1.33" height="1.33"/><rect x="1045.33" y="288.93" width="1.33" height="1.33"/><rect x="1124.93" y="288.93" width="1.33" height="1.33"/><rect x="1046.67" y="288.93" width="1.33" height="1.33"/><rect x="1123.60" y="288.93" width="1.33" height="1.33"/><rect x="1048.00" y="288.93" width="1.33" height="1.33"/><rect x="1122.27" y="288.93" width="1.33" height="1.33"/><rect x="1049.33" y="288.93" width="1.33" height="1.33"/><rect x="1120.93" y="288.93" width="1.33" height="1.33"/><rect x="1050.66" y="288.93" width="1.33" height="1.33"/><rect x="1119.60" y="288.93" width="1.33" height="1.33"/><rect x="1118.27" y="288.93" width="1.33" height="1.33"/><rect x="1116.94" y="288.93" width="1.33" height="1.33"/><rect x="1054.66" y="288.93" width="1.33" height="1.33"/><rect x="1115.60" y="288.93" width="1.33" height="1.33"/><rect x="1114.27" y="288.93" width="1.33" height="1.33"/><rect x="1057.33" y="288.93" width="1.33" height="1.33"/><rect x="1112.94" y="288.93" width="1.33" height="1.33"/><rect x="1058.66" y="288.93" width="1.33" height="1.33"/><rect x="1111.60" y="288.93" width="1.33" height="1.33"/><rect x="1060.00" y="288.93" width="1.33" height="1.33"/><rect x="1110.27" y="288.93" width="1.33" height="1.33"/><rect x="1061.33" y="288.93" width="1.33" height="1.33"/><rect x="1062.66" y="288.93" width="1.33" height="1.33"/><rect x="1107.61" y="288.93" width="1.33" height="1.33"/><rect x="1063.99" y="288.93" width="1.33" height="1.33"/><rect x="1106.27" y="288.93" width="1.33" height="1.33"/><rect x="1065.33" y="288.93" width="1.33" height="1.33"/><rect x="1099.61" y="288.93" width="1.33" height="1.33"/></g>
</svg>
<svg class="abs" style="left:0;top:0" width="1214" height="910"><rect x="55.00" y="574.5" width="32.70" height="2" fill="#2fd47c"/><rect x="55.00" y="577" width="33.45" height="26" fill="#3e3d4a"/><rect x="55.00" y="776.8" width="32.70" height="2" fill="#2fd47c"/><rect x="55.00" y="779.5" width="33.45" height="22.5" fill="#3e3d4a"/><rect x="89.45" y="380.8" width="32.70" height="195.7" fill="#2fe07e"/><rect x="89.45" y="577" width="33.45" height="26" fill="#33323d"/><rect x="89.45" y="776.8" width="32.70" height="2" fill="#2fd47c"/><rect x="89.45" y="779.5" width="33.45" height="22.5" fill="#33323d"/><rect x="123.90" y="380.8" width="32.70" height="195.7" fill="#2fe07e"/><rect x="123.90" y="577" width="33.45" height="26" fill="#33323d"/><rect x="123.90" y="604.2" width="32.70" height="174.6" fill="#2fe07e"/><rect x="123.90" y="779.5" width="33.45" height="22.5" fill="#33323d"/><rect x="158.35" y="574.5" width="32.70" height="2" fill="#2fd47c"/><rect x="158.35" y="577" width="33.45" height="26" fill="#33323d"/><rect x="158.35" y="776.8" width="32.70" height="2" fill="#2fd47c"/><rect x="158.35" y="779.5" width="33.45" height="22.5" fill="#33323d"/><rect x="192.80" y="574.5" width="32.70" height="2" fill="#2fd47c"/><rect x="192.80" y="577" width="33.45" height="26" fill="#3e3d4a"/><rect x="192.80" y="604.2" width="32.70" height="174.6" fill="#2fe07e"/><rect x="192.80" y="779.5" width="33.45" height="22.5" fill="#3e3d4a"/><rect x="227.25" y="380.8" width="32.70" height="195.7" fill="#2fe07e"/><rect x="227.25" y="577" width="33.45" height="26" fill="#33323d"/><rect x="227.25" y="776.8" width="32.70" height="2" fill="#2fd47c"/><rect x="227.25" y="779.5" width="33.45" height="22.5" fill="#33323d"/><rect x="261.70" y="380.8" width="32.70" height="195.7" fill="#2fe07e"/><rect x="261.70" y="577" width="33.45" height="26" fill="#33323d"/><rect x="261.70" y="776.8" width="32.70" height="2" fill="#2fd47c"/><rect x="261.70" y="779.5" width="33.45" height="22.5" fill="#33323d"/><rect x="296.15" y="574.5" width="32.70" height="2" fill="#2fd47c"/><rect x="296.15" y="577" width="33.45" height="26" fill="#33323d"/><rect x="296.15" y="776.8" width="32.70" height="2" fill="#2fd47c"/><rect x="296.15" y="779.5" width="33.45" height="22.5" fill="#33323d"/><rect x="330.60" y="380.8" width="32.70" height="195.7" fill="#2fe07e"/><rect x="330.60" y="577" width="33.45" height="26" fill="#3e3d4a"/><rect x="330.60" y="604.2" width="32.70" height="174.6" fill="#2fe07e"/><rect x="330.60" y="779.5" width="33.45" height="22.5" fill="#3e3d4a"/><rect x="365.05" y="574.5" width="32.70" height="2" fill="#2fd47c"/><rect x="365.05" y="577" width="33.45" height="26" fill="#33323d"/><rect x="365.05" y="776.8" width="32.70" height="2" fill="#2fd47c"/><rect x="365.05" y="779.5" width="33.45" height="22.5" fill="#33323d"/><rect x="399.50" y="574.5" width="32.70" height="2" fill="#2fd47c"/><rect x="399.50" y="577" width="33.45" height="26" fill="#33323d"/><rect x="399.50" y="604.2" width="32.70" height="174.6" fill="#2fe07e"/><rect x="399.50" y="779.5" width="33.45" height="22.5" fill="#33323d"/><rect x="433.95" y="574.5" width="32.70" height="2" fill="#2fd47c"/><rect x="433.95" y="577" width="33.45" height="26" fill="#33323d"/><rect x="433.95" y="776.8" width="32.70" height="2" fill="#2fd47c"/><rect x="433.95" y="779.5" width="33.45" height="22.5" fill="#33323d"/><rect x="468.40" y="574.5" width="32.70" height="2" fill="#2fd47c"/><rect x="468.40" y="577" width="33.45" height="26" fill="#3e3d4a"/><rect x="468.40" y="604.2" width="32.70" height="174.6" fill="#2fe07e"/><rect x="468.40" y="779.5" width="33.45" height="22.5" fill="#3e3d4a"/><rect x="502.85" y="380.8" width="32.70" height="195.7" fill="#2fe07e"/><rect x="502.85" y="577" width="33.45" height="26" fill="#33323d"/><rect x="502.85" y="776.8" width="32.70" height="2" fill="#2fd47c"/><rect x="502.85" y="779.5" width="33.45" height="22.5" fill="#33323d"/><rect x="537.30" y="380.8" width="32.70" height="195.7" fill="#2fe07e"/><rect x="537.30" y="577" width="33.45" height="26" fill="#33323d"/><rect x="537.30" y="776.8" width="32.70" height="2" fill="#2fd47c"/><rect x="537.30" y="779.5" width="33.45" height="22.5" fill="#33323d"/><rect x="571.75" y="380.8" width="32.70" height="195.7" fill="#2fe07e"/><rect x="571.75" y="577" width="33.45" height="26" fill="#33323d"/><rect x="571.75" y="604.2" width="32.70" height="174.6" fill="#2fe07e"/><rect x="571.75" y="779.5" width="33.45" height="22.5" fill="#33323d"/><rect x="606.20" y="380.8" width="32.70" height="195.7" fill="#2fe07e"/><rect x="606.20" y="577" width="33.45" height="26" fill="#3e3d4a"/><rect x="606.20" y="604.2" width="32.70" height="174.6" fill="#2fe07e"/><rect x="606.20" y="779.5" width="33.45" height="22.5" fill="#3e3d4a"/><rect x="640.65" y="380.8" width="32.70" height="195.7" fill="#2fe07e"/><rect x="640.65" y="577" width="33.45" height="26" fill="#33323d"/><rect x="640.65" y="604.2" width="32.70" height="174.6" fill="#2fe07e"/><rect x="640.65" y="779.5" width="33.45" height="22.5" fill="#33323d"/><rect x="675.10" y="574.5" width="32.70" height="2" fill="#2fd47c"/><rect x="675.10" y="577" width="33.45" height="26" fill="#33323d"/><rect x="675.10" y="776.8" width="32.70" height="2" fill="#2fd47c"/><rect x="675.10" y="779.5" width="33.45" height="22.5" fill="#33323d"/><rect x="709.55" y="574.5" width="32.70" height="2" fill="#2fd47c"/><rect x="709.55" y="577" width="33.45" height="26" fill="#33323d"/><rect x="709.55" y="604.2" width="32.70" height="174.6" fill="#2fe07e"/><rect x="709.55" y="779.5" width="33.45" height="22.5" fill="#33323d"/><rect x="743.00" y="379.8" width="34.70" height="196.7" fill="#a2f5c8"/><rect x="743.80" y="380.8" width="33.10" height="194.7" fill="#98efbb"/><rect x="744.00" y="577" width="33.45" height="26" fill="#3e3d4a"/><rect x="743.00" y="603.2" width="34.70" height="175.6" fill="#a2f5c8"/><rect x="743.80" y="604.2" width="33.10" height="173.6" fill="#98efbb"/><rect x="744.00" y="779.5" width="33.45" height="22.5" fill="#3e3d4a"/><rect x="778.45" y="574.5" width="32.70" height="2" fill="#2fd47c"/><rect x="778.45" y="577" width="33.45" height="26" fill="#33323d"/><rect x="778.45" y="604.2" width="32.70" height="174.6" fill="#2fe07e"/><rect x="778.45" y="779.5" width="33.45" height="22.5" fill="#33323d"/><rect x="812.90" y="574.5" width="32.70" height="2" fill="#2fd47c"/><rect x="812.90" y="577" width="33.45" height="26" fill="#33323d"/><rect x="812.90" y="776.8" width="32.70" height="2" fill="#2fd47c"/><rect x="812.90" y="779.5" width="33.45" height="22.5" fill="#33323d"/><rect x="847.35" y="380.8" width="32.70" height="195.7" fill="#2fe07e"/><rect x="847.35" y="577" width="33.45" height="26" fill="#33323d"/><rect x="847.35" y="604.2" width="32.70" height="174.6" fill="#2fe07e"/><rect x="847.35" y="779.5" width="33.45" height="22.5" fill="#33323d"/><rect x="881.80" y="380.8" width="32.70" height="195.7" fill="#2fe07e"/><rect x="881.80" y="577" width="33.45" height="26" fill="#3e3d4a"/><rect x="881.80" y="604.2" width="32.70" height="174.6" fill="#2fe07e"/><rect x="881.80" y="779.5" width="33.45" height="22.5" fill="#3e3d4a"/><rect x="916.25" y="380.8" width="32.70" height="195.7" fill="#2fe07e"/><rect x="916.25" y="577" width="33.45" height="26" fill="#33323d"/><rect x="916.25" y="604.2" width="32.70" height="174.6" fill="#2fe07e"/><rect x="916.25" y="779.5" width="33.45" height="22.5" fill="#33323d"/><rect x="950.70" y="380.8" width="32.70" height="195.7" fill="#2fe07e"/><rect x="950.70" y="577" width="33.45" height="26" fill="#33323d"/><rect x="950.70" y="776.8" width="32.70" height="2" fill="#2fd47c"/><rect x="950.70" y="779.5" width="33.45" height="22.5" fill="#33323d"/><rect x="985.15" y="574.5" width="32.70" height="2" fill="#2fd47c"/><rect x="985.15" y="577" width="33.45" height="26" fill="#33323d"/><rect x="985.15" y="776.8" width="32.70" height="2" fill="#2fd47c"/><rect x="985.15" y="779.5" width="33.45" height="22.5" fill="#33323d"/><rect x="1019.60" y="380.8" width="32.70" height="195.7" fill="#2fe07e"/><rect x="1019.60" y="577" width="33.45" height="26" fill="#3e3d4a"/><rect x="1019.60" y="776.8" width="32.70" height="2" fill="#2fd47c"/><rect x="1019.60" y="779.5" width="33.45" height="22.5" fill="#3e3d4a"/><rect x="1054.05" y="574.5" width="32.70" height="2" fill="#2fd47c"/><rect x="1054.05" y="577" width="33.45" height="26" fill="#33323d"/><rect x="1054.05" y="604.2" width="32.70" height="174.6" fill="#2fe07e"/><rect x="1054.05" y="779.5" width="33.45" height="22.5" fill="#33323d"/><rect x="1088.50" y="574.5" width="32.70" height="2" fill="#2fd47c"/><rect x="1088.50" y="577" width="33.45" height="26" fill="#33323d"/><rect x="1088.50" y="776.8" width="32.70" height="2" fill="#2fd47c"/><rect x="1088.50" y="779.5" width="33.45" height="22.5" fill="#33323d"/><rect x="1122.95" y="574.5" width="32.70" height="2" fill="#2fd47c"/><rect x="1122.95" y="577" width="33.45" height="26" fill="#33323d"/><rect x="1122.95" y="604.2" width="32.70" height="174.6" fill="#2fe07e"/><rect x="1122.95" y="779.5" width="33.45" height="22.5" fill="#33323d"/></svg>
<div class="box" style="left:54px;top:365px;width:1103px;height:5px;border-radius:2.5px;background:#3d3d49"></div>
<div class="box" style="left:53.7px;top:364.8px;width:35px;height:5px;border-radius:2.5px;background:#00f08e"></div>
<div class="box" style="left:1122px;top:364.8px;width:35px;height:5px;border-radius:2.5px;background:#00f08e"></div>
<div class="box" style="left:19px;top:575px;width:23.7px;height:54px;border-radius:0 5px 5px 0;background:#383742"></div>
<div class="box" style="left:1170px;top:575.4px;width:25px;height:54px;border-radius:5px 0 0 5px;background:#383742"></div>
<svg class="abs" style="left:0;top:590px" width="1214" height="25" viewBox="0 590 1214 25" fill="none" stroke="#9aa2ac" stroke-width="1.2" stroke-linecap="round" stroke-linejoin="round"><path d="M35 597.2 L29 602.6 L35 608"/><path d="M1178.2 597.2 L1184 602.6 L1178.2 608"/></svg>
<div class="box" style="left:55.2px;top:830.6px;width:66.7px;height:31.6px;background:#3e3d4a;border-radius:6px 0 0 6px;"></div>
<div class="t" style="left:-12.649999999999991px;width:200px;text-align:center;top:841.6px;font-size:11px;color:#f4f4f6;letter-spacing:0.6px;text-indent:0.6px;font-weight:normal;-webkit-text-stroke:0.3px currentColor;transform:scaleX(1.12)">1</div>
<div class="box" style="left:124.2px;top:830.6px;width:66.7px;height:31.6px;background:#3e3d4a;"></div>
<div class="t" style="left:56.35000000000002px;width:200px;text-align:center;top:841.6px;font-size:11px;color:#f4f4f6;letter-spacing:0.6px;text-indent:0.6px;font-weight:normal;-webkit-text-stroke:0.3px currentColor;transform:scaleX(1.12)">2</div>
<div class="box" style="left:193.2px;top:830.6px;width:66.7px;height:31.6px;background:#3e3d4a;"></div>
<div class="t" style="left:125.35px;width:200px;text-align:center;top:841.6px;font-size:11px;color:#f4f4f6;letter-spacing:0.6px;text-indent:0.6px;font-weight:normal;-webkit-text-stroke:0.3px currentColor;transform:scaleX(1.12)">3</div>
<div class="box" style="left:262.2px;top:830.6px;width:66.7px;height:31.6px;background:#34333e;"></div>
<div class="t" style="left:194.35000000000002px;width:200px;text-align:center;top:842.8px;font-size:9px;color:#9aa2ac;letter-spacing:0px;text-indent:0px;">+</div>
<div class="box" style="left:331.2px;top:830.6px;width:66.7px;height:31.6px;background:#34333e;"></div>
<div class="t" style="left:263.35px;width:200px;text-align:center;top:842.8px;font-size:9px;color:#9aa2ac;letter-spacing:0px;text-indent:0px;">+</div>
<div class="box" style="left:400.2px;top:830.6px;width:66.7px;height:31.6px;background:#34333e;"></div>
<div class="t" style="left:332.35px;width:200px;text-align:center;top:842.8px;font-size:9px;color:#9aa2ac;letter-spacing:0px;text-indent:0px;">+</div>
<div class="box" style="left:469.2px;top:830.6px;width:66.7px;height:31.6px;background:#34333e;"></div>
<div class="t" style="left:401.35px;width:200px;text-align:center;top:842.8px;font-size:9px;color:#9aa2ac;letter-spacing:0px;text-indent:0px;">+</div>
<div class="box" style="left:538.2px;top:830.6px;width:66.7px;height:31.6px;background:#34333e;"></div>
<div class="t" style="left:470.35px;width:200px;text-align:center;top:842.8px;font-size:9px;color:#9aa2ac;letter-spacing:0px;text-indent:0px;">+</div>
<div class="box" style="left:607.2px;top:830.6px;width:66.7px;height:31.6px;background:#3e3d4a;"></div>
<div class="t" style="left:539.35px;width:200px;text-align:center;top:841.6px;font-size:11px;color:#f4f4f6;letter-spacing:0.6px;text-indent:0.6px;font-weight:normal;-webkit-text-stroke:0.3px currentColor;transform:scaleX(1.12)">9</div>
<div class="box" style="left:676.2px;top:830.6px;width:66.7px;height:31.6px;background:#3e3d4a;"></div>
<div class="t" style="left:608.35px;width:200px;text-align:center;top:841.6px;font-size:11px;color:#f4f4f6;letter-spacing:0.6px;text-indent:0.6px;font-weight:normal;-webkit-text-stroke:0.3px currentColor;transform:scaleX(1.12)">10</div>
<div class="box" style="left:745.2px;top:830.6px;width:66.7px;height:31.6px;background:#3e3d4a;"></div>
<div class="t" style="left:677.35px;width:200px;text-align:center;top:841.6px;font-size:11px;color:#f4f4f6;letter-spacing:0.6px;text-indent:0.6px;font-weight:normal;-webkit-text-stroke:0.3px currentColor;transform:scaleX(1.12)">11</div>
<div class="box" style="left:814.2px;top:830.6px;width:66.7px;height:31.6px;background:#2fe07e;"></div>
<div class="t" style="left:746.35px;width:200px;text-align:center;top:841.6px;font-size:11px;color:#f4f4f6;letter-spacing:0.6px;text-indent:0.6px;font-weight:normal;-webkit-text-stroke:0.3px currentColor;transform:scaleX(1.12)">12</div>
<div class="box" style="left:883.2px;top:830.6px;width:66.7px;height:31.6px;background:#34333e;"></div>
<div class="t" style="left:815.35px;width:200px;text-align:center;top:842.8px;font-size:9px;color:#9aa2ac;letter-spacing:0px;text-indent:0px;">+</div>
<div class="box" style="left:952.2px;top:830.6px;width:66.7px;height:31.6px;background:#34333e;"></div>
<div class="t" style="left:884.35px;width:200px;text-align:center;top:842.8px;font-size:9px;color:#9aa2ac;letter-spacing:0px;text-indent:0px;">+</div>
<div class="box" style="left:1021.2px;top:830.6px;width:66.7px;height:31.6px;background:#34333e;"></div>
<div class="t" style="left:953.3499999999999px;width:200px;text-align:center;top:842.8px;font-size:9px;color:#9aa2ac;letter-spacing:0px;text-indent:0px;">+</div>
<div class="box" style="left:1090.2px;top:830.6px;width:66.7px;height:31.6px;background:#34333e;border-radius:0 6px 6px 0;"></div>
<div class="t" style="left:1022.3499999999999px;width:200px;text-align:center;top:842.8px;font-size:9px;color:#9aa2ac;letter-spacing:0px;text-indent:0px;">+</div>
<svg class="abs" style="left:1160px;top:835px" width="30" height="25" viewBox="1160 835 30 25"><path d="M1169 841.5 H1179.5 Q1181 841.5 1181 843 V849.5 Q1181 851 1179.5 851 H1169 L1166 846.3 Z" fill="#6e6e7a"/><path d="M1172.2 844 L1176.8 848.6 M1176.8 844 L1172.2 848.6" stroke="#2d2d36" stroke-width="1.3"/></svg>
</body></html>
